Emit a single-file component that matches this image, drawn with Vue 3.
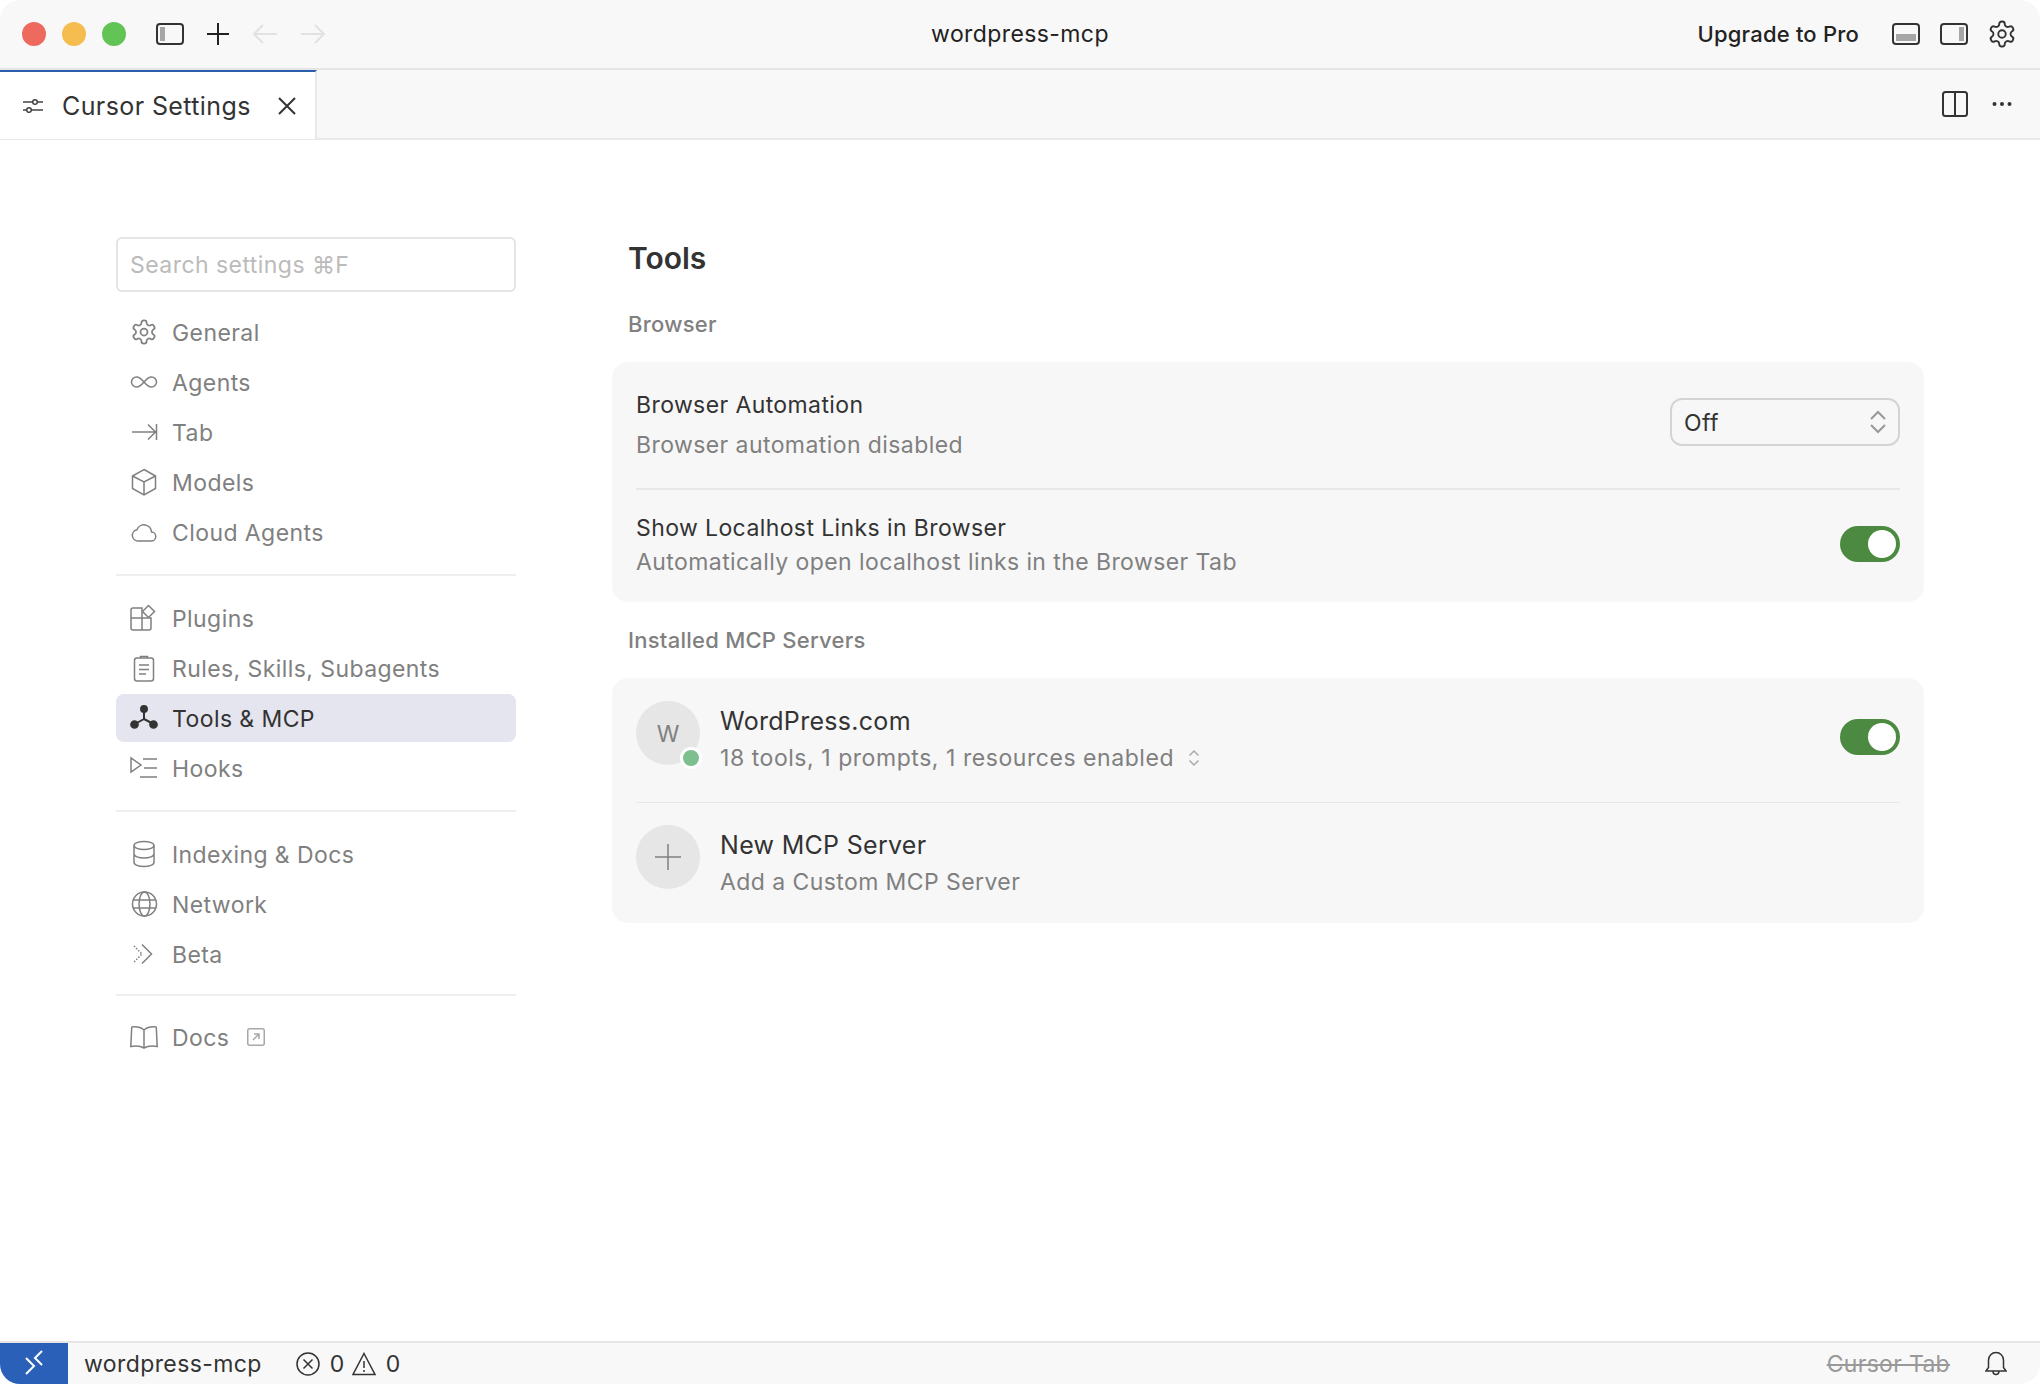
<script setup>
const gear = '<path d="M12.22 2h-.44a2 2 0 0 0-2 2v.18a2 2 0 0 1-1 1.73l-.43.25a2 2 0 0 1-2 0l-.15-.08a2 2 0 0 0-2.73.73l-.22.38a2 2 0 0 0 .73 2.73l.15.1a2 2 0 0 1 1 1.72v.51a2 2 0 0 1-1 1.74l-.15.09a2 2 0 0 0-.73 2.73l.22.38a2 2 0 0 0 2.73.73l.15-.08a2 2 0 0 1 2 0l.43.25a2 2 0 0 1 1 1.73V20a2 2 0 0 0 2 2h.44a2 2 0 0 0 2-2v-.18a2 2 0 0 1 1-1.73l.43-.25a2 2 0 0 1 2 0l.15.08a2 2 0 0 0 2.73-.73l.22-.39a2 2 0 0 0-.73-2.73l-.15-.08a2 2 0 0 1-1-1.74v-.5a2 2 0 0 1 1-1.74l.15-.09a2 2 0 0 0 .73-2.73l-.22-.38a2 2 0 0 0-2.73-.73l-.15.08a2 2 0 0 1-2 0l-.43-.25a2 2 0 0 1-1-1.73V4a2 2 0 0 0-2-2z"/><circle cx="12" cy="12" r="3"/>'
const icons = {
  general: '<g transform="scale(1.1667)">' + gear + '</g>',
  agents: '<path d="M14 14c-2.500-3-4.500-5-7.500-5a5 5 0 0 0 0 10c3 0 5-2 7.500-5c2.500-3 4.500-5 7.500-5a5 5 0 0 1 0 10c-3 0-5-2-7.500-5z"/>',
  tab: '<path d="M2 14h24M18 6.500l7.500 7.500-7.500 7.500M26.500 6v16"/>',
  models: '<path d="M14 1.500l11.500 6.500v12.500L14 27 2.500 20.500V8zM2.500 8L14 14l11.500-6M14 14v13"/>',
  cloud: '<path d="M8 23h13a4.500 4.500 0 0 0 .5-9A7.500 7.500 0 0 0 7 11.700 5.700 5.700 0 0 0 8 23z"/>',
  plugins: '<path d="M12 14V4H3a2 2 0 0 0-2 2v8zM1 14v10a2 2 0 0 0 2 2h16a2 2 0 0 0 2-2V14zM12 14v12"/><path d="M18.500 1.500l6 6-6 6-6-6z"/>',
  rules: '<rect x="4.500" y="4" width="19" height="23" rx="2.500"/><path d="M10.500 4V2.500h7V4M9 11h10M9 15.500h10M9 20h7"/>',
  tools: '<path d="M14 5v10M14 15L5 20M14 15l9.500 5" stroke-width="2"/><circle cx="14" cy="5" r="3.200" fill="currentColor"/><circle cx="4.500" cy="20.500" r="3.600" fill="currentColor"/><circle cx="23.500" cy="20.500" r="3.600" fill="currentColor"/>',
  hooks: '<path d="M1 4v14l10-7zM13 5h14M14 14h13M10 23h17"/>',
  indexing: '<ellipse cx="14" cy="5.500" rx="10" ry="4"/><path d="M4 5.500v17c0 2.200 4.500 4 10 4s10-1.800 10-4v-17M4 14c0 2.200 4.500 4 10 4s10-1.800 10-4"/>',
  network: '<circle cx="14.500" cy="14" r="12"/><ellipse cx="14.500" cy="14" rx="5.500" ry="12"/><path d="M3.500 10h22M3.500 18h22"/>',
  beta: '<path d="M4 6l8 8-8 8" stroke-dasharray="1.500 1.500"/><path d="M12 4.500l9.500 9.500-9.500 9.500"/>',
  docs: '<path d="M14 7C12 5 8 3.500 2.500 3.800c-.5 0-.8.300-.8.800L.8 23.500c4.500-.8 10-.4 13.200 1.500 3.200-1.900 8.700-2.300 13.200-1.500l-.9-18.900c0-.5-.3-.8-.8-.8C20 3.500 16 5 14 7zM14 7v18"/>'
}
const groups = [
  [['General', 'general'], ['Agents', 'agents'], ['Tab', 'tab'], ['Models', 'models'], ['Cloud Agents', 'cloud']],
  [['Plugins', 'plugins'], ['Rules, Skills, Subagents', 'rules'], ['Tools & MCP', 'tools'], ['Hooks', 'hooks']],
  [['Indexing & Docs', 'indexing'], ['Network', 'network'], ['Beta', 'beta']]
]
</script>

<template>
  <div class="app">
    <header class="titlebar">
      <div class="tb-left">
        <span class="light red"></span><span class="light yellow"></span><span class="light green"></span>
        <svg class="panel first" viewBox="0 0 28 22"><rect x="1" y="1" width="26" height="20" rx="3"/><rect x="4" y="4" width="5" height="14" fill="#a6a6a6" stroke="none"/></svg>
        <svg class="plus" viewBox="0 0 24 24"><path d="M12 1v22M1 12h22"/></svg>
        <svg class="arrow" viewBox="0 0 26 22"><path d="M25 11H2M11 2l-9 9 9 9"/></svg>
        <svg class="arrow" viewBox="0 0 26 22"><path d="M1 11h23M15 2l9 9-9 9"/></svg>
      </div>
      <div class="tb-title">wordpress-mcp</div>
      <div class="tb-right">
        <span class="upgrade">Upgrade to Pro</span>
        <svg class="panel" viewBox="0 0 28 22"><rect x="1" y="1" width="26" height="20" rx="3"/><rect x="4" y="11" width="20" height="7" fill="#a6a6a6" stroke="none"/></svg>
        <svg class="panel" viewBox="0 0 28 22"><rect x="1" y="1" width="26" height="20" rx="3"/><rect x="19" y="4" width="5" height="14" fill="#a6a6a6" stroke="none"/></svg>
        <svg class="tb-gear" viewBox="0 0 24 24" v-html="gear"></svg>
      </div>
    </header>

    <div class="tabbar">
      <div class="tab">
        <svg class="tab-ico" viewBox="0 0 20 18"><path d="M0 5h10M14 5h6M0 13h4M8 13h12"/><circle cx="12" cy="5" r="2.300"/><circle cx="6" cy="13" r="2.300"/></svg>
        <span class="tab-label">Cursor Settings</span>
        <svg class="tab-x" viewBox="0 0 18 18"><path d="M1 1l16 16M17 1L1 17"/></svg>
      </div>
      <div class="tab-actions">
        <svg class="split" viewBox="0 0 26 26"><rect x="1" y="1" width="24" height="24" rx="2.500"/><path d="M13 1v24"/></svg>
        <svg class="dots" viewBox="0 0 20 6"><circle cx="2.500" cy="3" r="2"/><circle cx="10" cy="3" r="2"/><circle cx="17.500" cy="3" r="2"/></svg>
      </div>
    </div>

    <div class="body">
      <aside class="sidebar">
        <div class="search">Search settings ⌘F</div>
        <template v-for="(g, gi) in groups" :key="gi">
          <nav class="group">
            <div v-for="item in g" :key="item[0]" class="nav" :class="{ active: item[1] === 'tools' }">
              <svg class="nav-ico" viewBox="0 0 28 28" v-html="icons[item[1]]"></svg>
              <span>{{ item[0] }}</span>
            </div>
          </nav>
          <div class="rule" :class="{ last: gi === 2 }"></div>
        </template>
        <div class="nav">
          <svg class="nav-ico" viewBox="0 0 28 28" v-html="icons.docs"></svg>
          <span>Docs</span>
          <svg class="ext" viewBox="0 0 18 18"><rect x=".75" y=".75" width="16.500" height="16.500" rx="2"/><path d="M6 12l6-6M7 6h5v5"/></svg>
        </div>
      </aside>

      <main class="main">
        <h1 class="h1">Tools</h1>
        <div class="label">Browser</div>
        <section class="card">
          <div class="row r1">
            <div class="col c1">
              <div class="t">Browser Automation</div>
              <div class="s">Browser automation disabled</div>
            </div>
            <div class="select">
              <span>Off</span>
              <svg class="updown" viewBox="0 0 18 24"><path d="M2 9l7-7 7 7M2 15l7 7 7-7"/></svg>
            </div>
          </div>
          <div class="line"></div>
          <div class="row r2">
            <div class="col c2">
              <div class="t">Show Localhost Links in Browser</div>
              <div class="s">Automatically open localhost links in the Browser Tab</div>
            </div>
            <div class="toggle t2"><i></i></div>
          </div>
        </section>

        <div class="label second">Installed MCP Servers</div>
        <section class="card">
          <div class="row r3">
            <div class="avatar"><span class="w">W</span><b class="dot"></b></div>
            <div class="col c3">
              <div class="t big">WordPress.com</div>
              <div class="s sum">18 tools, 1 prompts, 1 resources enabled
                <svg class="mini" viewBox="0 0 12 18"><path d="M1.500 6.500L6 2l4.500 4.500M1.500 11.500L6 16l4.500-4.500"/></svg>
              </div>
            </div>
            <div class="toggle t3"><i></i></div>
          </div>
          <div class="line l2"></div>
          <div class="row r4">
            <div class="avatar">
              <svg class="add" viewBox="0 0 26 26"><path d="M13 0v26M0 13h26"/></svg>
            </div>
            <div class="col c4">
              <div class="t big">New MCP Server</div>
              <div class="s">Add a Custom MCP Server</div>
            </div>
          </div>
        </section>
      </main>
    </div>

    <footer class="status">
      <div class="remote">
        <svg viewBox="0 0 68 42"><path d="M26 15l8 8-8 8M42 8l-7 7 7 7"/></svg>
      </div>
      <span class="st-name">wordpress-mcp</span>
      <svg class="st-ico" viewBox="0 0 24 24"><circle cx="12" cy="12" r="11"/><path d="M7.500 7.500l9 9M16.500 7.500l-9 9"/></svg>
      <span class="num">0</span>
      <svg class="st-ico warn" viewBox="0 0 24 24"><path d="M12 1.500L23 22.500H1zM12 9v7M12 18v2"/></svg>
      <span class="num">0</span>
      <span class="grow"></span>
      <span class="ctab">Cursor Tab</span>
      <svg class="bell" viewBox="0 0 22 26"><path d="M1 20h20l-2.500-3.500V9a7.500 7.500 0 0 0-15 0v7.500zM8 20.500a3 3 0 0 0 6 0"/></svg>
    </footer>
  </div>
</template>

<style>
html, body { margin: 0; background: #fff; }
</style>

<style scoped>
* { box-sizing: border-box; }
svg { display: block; flex: none; fill: none; stroke: currentColor; stroke-width: 1.5; }
.app { width: 2040px; height: 1384px; display: flex; flex-direction: column; border-radius: 20px; overflow: hidden; background: #fff; font-family: Inter, "Liberation Sans", sans-serif; color: #333; }

.titlebar { height: 70px; flex: none; display: flex; align-items: center; background: #f8f8f8; border-bottom: 2px solid #e5e5e5; position: relative; }
.tb-left { display: flex; align-items: center; padding-left: 22px; }
.light { width: 24px; height: 24px; border-radius: 50%; margin-right: 16px; }
.red { background: #ee6a5f; }
.yellow { background: #f5bd4f; }
.green { background: #61c454; }
.panel { width: 28px; height: 22px; color: #333; stroke-width: 2; }
.first { margin-left: 14px; }
.plus { width: 24px; height: 24px; margin-left: 22px; color: #222; stroke-width: 2; }
.arrow { width: 26px; height: 22px; color: #e2e2e2; stroke-width: 2; margin-left: 22px; }
.tb-title { position: absolute; left: 0; right: 0; text-align: center; font-size: 23px; letter-spacing: .4px; color: #222; pointer-events: none; }
.tb-right { margin-left: auto; display: flex; align-items: center; padding-right: 23px; gap: 20px; }
.upgrade { font-size: 22px; letter-spacing: .2px; font-weight: 500; color: #222; margin-right: 13px; }
.tb-gear { width: 30px; height: 30px; color: #333; margin-left: -1px; }

.tabbar { height: 70px; flex: none; display: flex; background: #f8f8f8; border-bottom: 2px solid #e8e8e8; }
.tab { width: 317px; height: 69px; background: #fff; border-top: 2px solid #2b5fae; border-right: 2px solid #e8e8e8; display: flex; align-items: center; padding: 0 0 0 23px; }
.tab-ico { width: 20px; height: 18px; color: #444; }
.tab-label { font-size: 25px; margin-left: 19px; letter-spacing: .4px; }
.tab-x { width: 18px; height: 18px; margin-left: 27px; color: #333; stroke-width: 2; }
.tab-actions { margin-left: auto; display: flex; align-items: center; padding-right: 28px; gap: 24px; }
.split { width: 26px; height: 26px; color: #333; stroke-width: 2; }
.dots { width: 20px; height: 6px; fill: #333; stroke: none; }

.body { flex: 1; display: flex; padding: 97px 0 0 116px; min-height: 0; }
.sidebar { width: 400px; flex: none; }
.search { height: 55px; border: 2px solid #e5e5e5; border-radius: 6px; display: flex; align-items: center; padding-left: 12px; color: #bbb; font-size: 23px; letter-spacing: .45px; margin-bottom: 16px; }
.group { display: flex; flex-direction: column; gap: 2px; }
.nav { height: 48px; display: flex; align-items: center; padding-left: 14px; border-radius: 8px; color: #808080; font-size: 23px; letter-spacing: .42px; }
.nav span { margin-left: 14px; padding-top: 2px; }
.nav-ico { width: 28px; height: 28px; }
.nav.active { background: #e5e5ef; color: #333; }
.rule { height: 2px; background: #eee; margin: 18px 0; }
.rule.last { margin: 16px 0 17px; }
.ext { width: 18px; height: 18px; margin-left: 18px; color: #a8a8a8; }

.main { margin-left: 96px; width: 1312px; }
.h1 { margin: 0; padding: 1px 0 0 16px; font-size: 30px; line-height: 40px; font-weight: 600; color: #333; }
.label { height: 28px; line-height: 28px; font-size: 22px; letter-spacing: .25px; font-weight: 500; color: #808080; padding-left: 16px; margin: 32px 0 24px; }
.label.second { margin: 24px 0 24px; }
.card { background: #f7f7f7; border-radius: 16px; display: flex; flex-direction: column; }
.row { display: flex; padding: 0 24px; }
.r1 { height: 126px; }
.r2 { height: 112px; }
.r3 { height: 124px; padding-top: 23px; }
.r4 { height: 120px; padding-top: 22px; }
.line { height: 2px; background: #e8e8e8; margin: 0 24px; }
.l2 { height: 1px; }
.col { display: flex; flex-direction: column; }
.c1 { padding-top: 29px; gap: 12px; }
.c2 { padding-top: 24px; gap: 6px; }
.c3 { padding-top: 6px; gap: 9px; margin-left: 20px; }
.c4 { padding-top: 6px; gap: 9px; margin-left: 20px; }
.t { font-size: 23px; line-height: 28px; letter-spacing: .4px; color: #333; }
.big { font-size: 25px; letter-spacing: .3px; }
.s { font-size: 23px; line-height: 28px; letter-spacing: .42px; color: #808080; }
.sum { display: flex; align-items: center; gap: 14px; letter-spacing: .55px; }
.mini { width: 12px; height: 18px; color: #aaa; }
.select { margin-left: auto; margin-top: 36px; width: 230px; height: 48px; border: 2px solid #d4d4d4; border-radius: 12px; display: flex; align-items: center; justify-content: space-between; padding: 2px 11px 0 12px; font-size: 23px; letter-spacing: .4px; color: #333; }
.updown { width: 18px; height: 24px; color: #999; stroke-width: 2; margin-top: -2px; }
.toggle { margin-left: auto; width: 60px; height: 36px; border-radius: 18px; background: #4c8a42; display: flex; align-items: center; justify-content: flex-end; padding-right: 4px; }
.toggle i { width: 28px; height: 28px; border-radius: 50%; background: #fff; }
.t2 { margin-top: 36px; }
.t3 { margin-top: 18px; }
.avatar { width: 64px; height: 64px; border-radius: 50%; background: #e6e6e6; flex: none; display: flex; align-items: center; justify-content: center; color: #808080; font-size: 23px; position: relative; }
.w { padding-top: 2px; }
.add { width: 26px; height: 26px; color: #808080; }
.dot { position: absolute; left: 44px; top: 46px; width: 22px; height: 22px; border-radius: 50%; background: #7dbf8e; border: 3px solid #fff; }

.status { height: 43px; flex: none; display: flex; align-items: center; background: #f8f8f8; border-top: 2px solid #e5e5e5; font-size: 23px; letter-spacing: .4px; color: #333; }
.remote { width: 68px; height: 41px; background: #2b60b8; flex: none; }
.remote svg { width: 68px; height: 42px; color: #fff; stroke-width: 2; }
.st-name { margin-left: 16px; }
.st-ico { width: 24px; height: 24px; margin-left: 34px; color: #333; }
.warn { margin-left: 7px; }
.num { margin-left: 10px; }
.grow { flex: 1; }
.ctab { color: #999; text-decoration: line-through; letter-spacing: .3px; }
.bell { width: 22px; height: 26px; margin: 0 33px 0 35px; color: #333; }
</style>
